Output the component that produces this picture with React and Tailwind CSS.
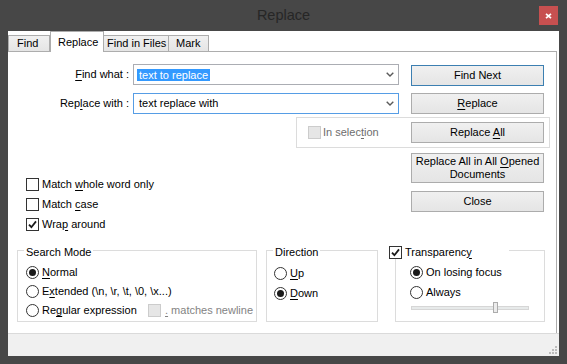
const U = ({ children }) => (
  <span className="underline decoration-1 underline-offset-[2px]">{children}</span>
);

function Checkbox({ checked, disabled }) {
  return (
    <span
      className={`flex h-[13px] w-[13px] shrink-0 items-center justify-center border ${
        disabled ? "border-[#cccccc] bg-[#e6e6e6]" : "border-[#333333] bg-white"
      }`}
    >
      {checked && (
        <svg width="9" height="9" viewBox="0 0 9 9">
          <path d="M1 4.6 L3.4 7.2 L8 1.4" fill="none" stroke="#1a1a1a" strokeWidth="1.8" />
        </svg>
      )}
    </span>
  );
}

function Radio({ checked }) {
  return (
    <span className="flex h-[13px] w-[13px] shrink-0 items-center justify-center rounded-full border border-[#333333] bg-white">
      {checked && <span className="h-[7px] w-[7px] rounded-full bg-[#1a1a1a]" />}
    </span>
  );
}

function Button({ children, primary, className = "" }) {
  return (
    <div
      className={`flex w-[133px] items-center justify-center border bg-linear-to-b from-[#f0f0f0] to-[#e5e5e5] text-center leading-[13px] ${
        primary ? "border-[#3c7fb1]" : "border-[#acacac]"
      } ${className}`}
    >
      {children}
    </div>
  );
}

const Chevron = () => (
  <svg width="8" height="5" viewBox="0 0 8 5" className="ml-auto mr-[4px]">
    <path d="M0.7 0.7 L4 4 L7.3 0.7" fill="none" stroke="#5a5a5a" strokeWidth="1.4" />
  </svg>
);

function Tab({ label, active, className = "" }) {
  return (
    <div
      className={`flex items-center whitespace-nowrap border-x border-t border-[#acacac] ${
        active
          ? "relative z-10 -mb-px h-[21px] bg-white"
          : "h-[16px] bg-linear-to-b from-[#f0f0f0] to-[#e5e5e5]"
      } ${className}`}
    >
      {label}
    </div>
  );
}

export default function App() {
  return (
    <div
      className="flex h-[364px] w-[567px] flex-col bg-[#474747] text-[11px] text-black"
      style={{ fontFamily: '"Liberation Sans", Arial, sans-serif' }}
    >
      {/* title bar */}
      <div className="grid h-[31px] grid-cols-[1fr_auto_1fr]">
        <div />
        <div className="flex items-center">
          <span className="text-[14.5px] text-neutral-800">Replace</span>
        </div>
        <div className="flex justify-end pr-[9px] pt-[6px]">
          <div className="flex h-[19px] w-[19px] items-center justify-center bg-[#c75050]">
            <svg width="7" height="6" viewBox="0 0 7 6">
              <path d="M1 0.8 L6 5.2 M6 0.8 L1 5.2" stroke="white" strokeWidth="1.7" />
            </svg>
          </div>
        </div>
      </div>

      {/* client */}
      <div className="mx-[8px] mb-[8px] flex flex-1 flex-col bg-white">
        <div className="flex h-[20px] items-end">
          <Tab label="Find" className="w-[42px] pl-[8px]" />
          <Tab label="Replace" active className="w-[54px] pl-[7px]" />
          <Tab label="Find in Files" className="-ml-px w-[66px] pl-[3px]" />
          <Tab label="Mark" className="-ml-px w-[41px] pl-[7px]" />
        </div>

        <div className="flex w-[549px] flex-1 flex-col border-r border-t border-[#adadad]">
          <div className="mt-[12px] flex items-start">
            {/* left column */}
            <div className="flex w-[391px] flex-col">
              <div className="flex h-[21px] items-center">
                <div className="w-[125px] pr-[4px] text-right">
                  <U>F</U>ind what :
                </div>
                <div className="flex h-[21px] w-[266px] items-center border border-[#abadb3] pl-[3px]">
                  <span className="bg-[#3399ff] px-[2px] leading-[12px] text-white">text to replace</span>
                  <Chevron />
                </div>
              </div>
              <div className="mt-[8px] flex h-[21px] items-center">
                <div className="w-[125px] pr-[4px] text-right">
                  Rep<U>l</U>ace with :
                </div>
                <div className="flex h-[21px] w-[266px] items-center border border-[#569de5] pl-[5px]">
                  <span>text replace with</span>
                  <Chevron />
                </div>
              </div>

              <div className="mt-[60px] flex flex-col pl-[18px]">
                <div className="flex h-[20px] items-center gap-[3px]">
                  <Checkbox />
                  <span>
                    Match <U>w</U>hole word only
                  </span>
                </div>
                <div className="flex h-[20px] items-center gap-[3px]">
                  <Checkbox />
                  <span>
                    Match <U>c</U>ase
                  </span>
                </div>
                <div className="flex h-[20px] items-center gap-[3px]">
                  <Checkbox checked />
                  <span>
                    Wra<U>p</U> around
                  </span>
                </div>
              </div>
            </div>

            {/* right column */}
            <div className="ml-[12px] flex w-[133px] flex-col">
              <Button primary className="mt-[1px] h-[21px]">
                Find Next
              </Button>
              <Button className="mt-[7px] h-[21px]">
                <span>
                  <U>R</U>eplace
                </span>
              </Button>
              <div className="-ml-[115px] mt-[3px] flex h-[31px] w-[254px] items-center border border-[#dcdcdc] pl-[11px]">
                <Checkbox disabled />
                <span className="ml-[2px] text-[#6d6d6d]">
                  In selec<U>t</U>ion
                </span>
                <Button className="ml-auto mr-[5px] h-[21px]">
                  <span>
                    Replace <U>A</U>ll
                  </span>
                </Button>
              </div>
              <Button className="mt-[5px] h-[30px]">
                <span>
                  Replace All in All <U>O</U>pened
                  <br />
                  Documents
                </span>
              </Button>
              <Button className="mt-[8px] h-[21px]">Close</Button>
            </div>
          </div>

          {/* group boxes */}
          <div className="mt-[16px] flex items-start">
            <div className="relative ml-[9px] flex h-[72px] w-[240px] flex-col border border-[#dcdcdc] pl-[8px] pt-[11px]">
              <div className="absolute -top-[6px] left-[6px] flex h-[14px] items-center bg-white px-[2px]">
                Search Mode
              </div>
              <div className="flex h-[20px] items-center gap-[3px]">
                <Radio checked />
                <span>
                  <U>N</U>ormal
                </span>
              </div>
              <div className="flex h-[19px] items-center gap-[3px]">
                <Radio />
                <span>
                  E<U>x</U>tended (\n, \r, \t, \0, \x...)
                </span>
              </div>
              <div className="flex h-[19px] items-center">
                <Radio />
                <span className="ml-[3px] w-[106px]">
                  Re<U>g</U>ular expression
                </span>
                <Checkbox disabled />
                <span className="ml-[4px] text-[#838383]">
                  <U>.</U> matches newline
                </span>
              </div>
            </div>

            <div className="relative ml-[9px] flex h-[72px] w-[112px] flex-col border border-[#dcdcdc] pl-[7px] pt-[12px]">
              <div className="absolute -top-[6px] left-[6px] flex h-[14px] items-center bg-white px-[2px]">
                Direction
              </div>
              <div className="flex h-[20px] items-center gap-[3px]">
                <Radio />
                <span>
                  <U>U</U>p
                </span>
              </div>
              <div className="flex h-[20px] items-center gap-[3px]">
                <Radio checked />
                <span>
                  <U>D</U>own
                </span>
              </div>
            </div>

            <div className="relative ml-[17px] flex h-[72px] w-[150px] flex-col border border-[#dcdcdc] pl-[14px] pt-[11px]">
              <div className="absolute -left-[7px] -top-[6px] flex h-[14px] w-[120px] items-center gap-[3px] bg-white">
                <Checkbox checked />
                <span>
                  Transparenc<U>y</U>
                </span>
              </div>
              <div className="flex h-[20px] items-center gap-[3px]">
                <Radio checked />
                <span>On losing focus</span>
              </div>
              <div className="flex h-[20px] items-center gap-[3px]">
                <Radio />
                <span>Always</span>
              </div>
              <div className="relative ml-[1px] flex h-[11px] w-[118px] items-center">
                <div className="h-[4px] w-full border border-[#d6d6d6] bg-[#e7eaea]" />
                <div className="absolute left-[82px] top-0 h-[11px] w-[5px] border border-[#acacac] bg-[#ececec]" />
              </div>
            </div>
          </div>
        </div>

        {/* status bar */}
        <div className="flex h-[23px] items-end justify-end border-t border-[#dadada] bg-[#f0f0f0] pb-[2px] pr-[2px]">
          <svg width="8" height="8" viewBox="0 0 8 8" fill="#bcbcbc">
            <rect x="6" y="0" width="2" height="2" />
            <rect x="3" y="3" width="2" height="2" />
            <rect x="6" y="3" width="2" height="2" />
            <rect x="0" y="6" width="2" height="2" />
            <rect x="3" y="6" width="2" height="2" />
            <rect x="6" y="6" width="2" height="2" />
          </svg>
        </div>
      </div>
    </div>
  );
}
